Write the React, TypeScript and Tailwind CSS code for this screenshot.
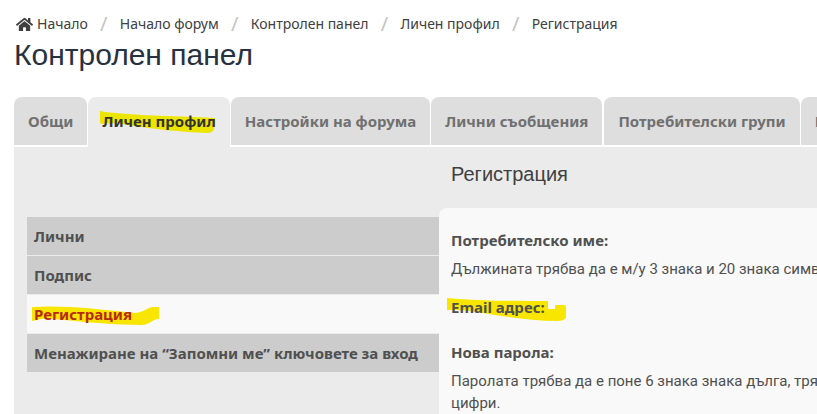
import { Fragment } from "react";
import { FaHome } from "react-icons/fa";

const breadcrumbs = ["Начало", "Начало форум", "Контролен панел", "Личен профил", "Регистрация"];

const tabs = [
  { label: "Общи", gap: "mr-px" },
  { label: "Личен профил", gap: "mr-px", active: true },
  { label: "Настройки на форума", gap: "mr-px" },
  { label: "Лични съобщения", gap: "mr-0.5" },
  { label: "Потребителски групи", gap: "mr-px" },
  { label: "Приятели и недоброжелатели", gap: "" },
];

const menu = [
  { label: "Лични" },
  { label: "Подпис" },
  { label: "Регистрация", active: true },
  { label: "Менажиране на “Запомни ме” ключовете за вход" },
];

function TabMarker() {
  return (
    <svg className="absolute top-0 -left-0.5 -z-10 h-6 w-[116px]" viewBox="0 0 116 24" fill="#ece500" aria-hidden="true">
      <path d="M0 0 L5 1 C40 5 78 5 115 7 L114 18 Q113 22 107 22 C82 21 52 18 28 14 C18 12 10 12 4 13 Q0 13 0 11 Z" />
    </svg>
  );
}

function MenuMarker() {
  return (
    <svg className="absolute top-0.5 -left-0.5 -z-10 h-5 w-[128px]" viewBox="0 0 128 20" fill="#f9e600" aria-hidden="true">
      <path d="M0 1 Q15 0 38 1 C60 2 82 5 103 7 C113 6 115 1 122 1 L127 1 L127 13 C119 13 119 19 109 19 C83 19 55 16 32 14 C20 13 12 12 5 14 L0 15 Z" />
    </svg>
  );
}

function EmailMarker() {
  return (
    <svg className="absolute top-0.5 -left-1 -z-10 h-6 w-[120px]" viewBox="0 0 120 24" fill="#f9e600" aria-hidden="true">
      <path d="M0 0 L12 1 C40 3 72 3 101 3 L101 11 L108 11 L108 7 L117 7 Q119 7 119 9 L119 19 Q118 23 110 23 C82 23 54 18 30 14 C19 12 9 12 0 12 Z" />
    </svg>
  );
}

export default function App() {
  return (
    <div className="flex min-h-screen flex-col overflow-hidden bg-white pl-3.5 font-['Noto_Sans',sans-serif] text-[15px] text-[#505050]">
      <header className="pt-3.5">
        <nav className="flex h-5 items-center whitespace-nowrap text-sm text-[#404040]">
          {breadcrumbs.map((crumb, i) => (
            <Fragment key={crumb}>
              {i > 0 && <span className="w-8 text-center text-xl text-[#c4c4c4]">/</span>}
              <a href="#" className="flex items-center gap-1">
                {i === 0 && <FaHome className="ml-0.5 size-[17px]" />}
                {crumb}
              </a>
            </Fragment>
          ))}
        </nav>
        <h1 className="pt-px font-['Liberation_Sans',sans-serif] text-[30px] leading-10 text-[#28313f]">Контролен панел</h1>
      </header>

      <nav className="mt-[22px] flex items-start whitespace-nowrap font-bold">
        {tabs.map((tab) => (
          <a
            key={tab.label}
            href="#"
            className={`${tab.gap} shrink-0 rounded-t-lg leading-12 ${
              tab.active ? "bg-[#ebebeb] px-3.5 pb-0.5 text-[#333333]" : "bg-[#dedede] px-3.5 text-[#707070]"
            }`}
          >
            {tab.active ? (
              <span className="relative isolate inline-block leading-5">
                <TabMarker />
                {tab.label}
              </span>
            ) : (
              tab.label
            )}
          </a>
        ))}
      </nav>

      <div className="flex grow bg-[#ebebeb] pl-[13px]">
        <aside className="w-[412px] shrink-0 pt-[70px]">
          <ul className="flex flex-col gap-px font-bold">
            {menu.map((item) => (
              <li key={item.label}>
                <a
                  href="#"
                  className={`flex h-[38px] items-center px-[7px] ${
                    item.active ? "bg-[#f9f9f9] text-[#b52a10]" : "bg-[#cccccc] text-[#505050]"
                  }`}
                >
                  <span className="relative isolate leading-5">
                    {item.active && <MenuMarker />}
                    {item.label}
                  </span>
                </a>
              </li>
            ))}
          </ul>
        </aside>

        <main className="flex min-w-0 grow flex-col">
          <h2 className="px-3 pt-[11px] pb-3 font-['Liberation_Sans',sans-serif] text-xl leading-8 text-[#404040]">Регистрация</h2>
          <dl className="mt-1.5 grow overflow-hidden rounded-tl-lg bg-[#f9f9f9] px-3 pt-[21px] leading-[22px] [&_dd]:font-['Roboto','Noto_Sans',sans-serif] [&_dt]:font-bold">
            <dt>Потребителско име:</dt>
            <dd className="mt-[7px] whitespace-nowrap">Дължината трябва да е м/у 3 знака и 20 знака символа.</dd>
            <dt className="mt-4">
              <span className="relative isolate inline-block">
                <EmailMarker />
                Email адрес:
              </span>
            </dt>
            <dt className="mt-[23px]">Нова парола:</dt>
            <dd className="mt-[7px] whitespace-nowrap">
              Паролата трябва да е поне 6 знака знака дълга, трябва да съдържа букви и
              <br />
              цифри.
            </dd>
          </dl>
        </main>
      </div>
    </div>
  );
}
